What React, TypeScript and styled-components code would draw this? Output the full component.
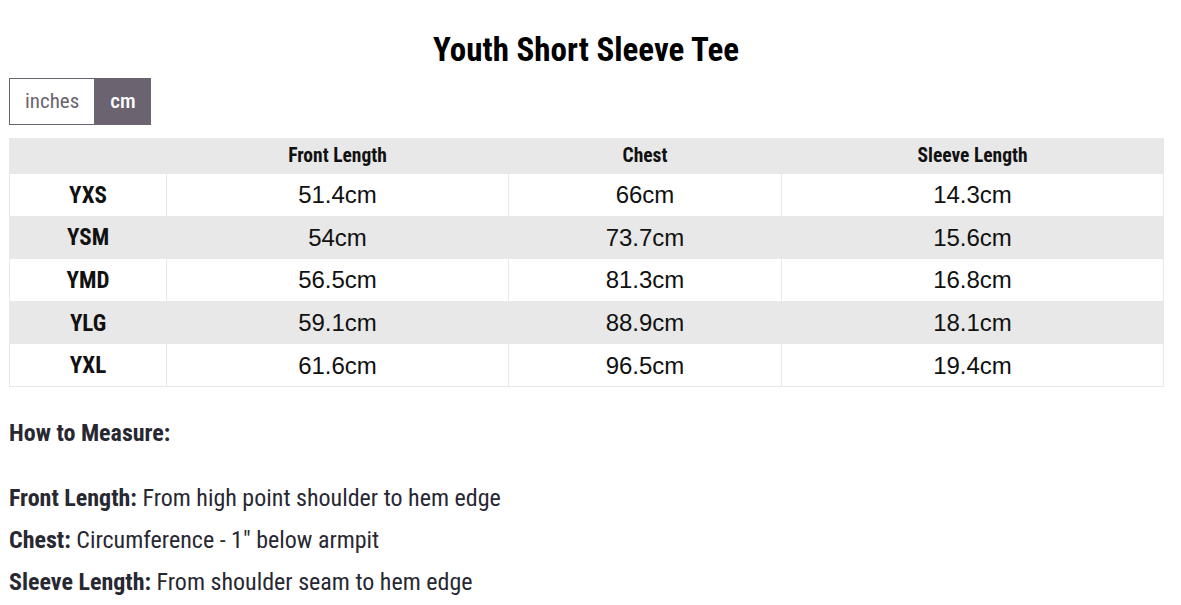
import React from "react";
import styled, { createGlobalStyle } from "styled-components";

const Global = createGlobalStyle`
  html, body { margin: 0; padding: 0; background: #fff; }
  body { font-family: "Roboto Condensed", Roboto, "Liberation Sans", sans-serif; }
`;

const Page = styled.div`
  width: 1154px;
  padding: 0 0 0 9px;
  display: flex;
  flex-direction: column;
`;

const Title = styled.h1`
  margin: 31px 0 0;
  height: 38px;
  line-height: 38px;
  text-align: center;
  font-size: 33px;
  font-weight: 700;
  color: #000;
`;

const Toggle = styled.div`
  margin-top: 9px;
  display: flex;
  align-self: flex-start;
`;

const ToggleBtn = styled.div<{ $active?: boolean }>`
  height: 47px;
  box-sizing: border-box;
  display: flex;
  align-items: center;
  justify-content: center;
  padding: 0 ${(p) => (p.$active ? "14px" : "15px")} 2px;
  font-size: 21px;
  border: 1px solid #6b6370;
  background: ${(p) => (p.$active ? "#6b6370" : "#fff")};
  color: ${(p) => (p.$active ? "#fff" : "#6b6370")};
  font-weight: ${(p) => (p.$active ? 500 : 400)};
`;

const Table = styled.table`
  margin-top: 13px;
  width: 1154px;
  border-collapse: collapse;
  table-layout: fixed;
`;

const HeadCell = styled.th`
  background: #e8e8e8;
  height: 32px;
  padding: 0 0 2px;
  font-size: 19.5px;
  font-weight: 700;
  color: #111;
  text-align: center;
  border: 1px solid #e8e8e8;
`;

const Row = styled.tr<{ $shade: boolean }>`
  background: ${(p) => (p.$shade ? "#e8e8e8" : "#fff")};
`;

const SizeCell = styled.td`
  height: 40.6px;
  padding: 1px 0 0;
  text-align: center;
  font-size: 23px;
  font-weight: 700;
  color: #111;
  border: 1px solid #e8e8e8;
`;

const ValueCell = styled.td`
  padding: 1px 0 0;
  text-align: center;
  font-family: "Liberation Sans", Arial, sans-serif;
  font-size: 24px;
  color: #111;
  border: 1px solid #e8e8e8;
`;

const Guide = styled.div`
  margin-top: 32px;
  color: #282832;
  font-size: 24px;
`;

const GuideTitle = styled.div`
  font-weight: 700;
  height: 28px;
  line-height: 28px;
  margin-bottom: 37px;
`;

const GuideLine = styled.div`
  height: 42px;
  line-height: 28px;
`;

const Strong = styled.b`
  font-weight: 700;
`;

const rows = [
  ["YXS", "51.4cm", "66cm", "14.3cm"],
  ["YSM", "54cm", "73.7cm", "15.6cm"],
  ["YMD", "56.5cm", "81.3cm", "16.8cm"],
  ["YLG", "59.1cm", "88.9cm", "18.1cm"],
  ["YXL", "61.6cm", "96.5cm", "19.4cm"],
];

export default function App() {
  return (
    <Page>
      <Global />
      <Title>Youth Short Sleeve Tee</Title>
      <Toggle>
        <ToggleBtn>inches</ToggleBtn>
        <ToggleBtn $active>cm</ToggleBtn>
      </Toggle>
      <Table>
        <colgroup>
          <col style={{ width: 157 }} />
          <col style={{ width: 342 }} />
          <col style={{ width: 273 }} />
          <col style={{ width: 382 }} />
        </colgroup>
        <thead>
          <tr>
            <HeadCell></HeadCell>
            <HeadCell>Front Length</HeadCell>
            <HeadCell>Chest</HeadCell>
            <HeadCell>Sleeve Length</HeadCell>
          </tr>
        </thead>
        <tbody>
          {rows.map((r, i) => (
            <Row key={r[0]} $shade={i % 2 === 1}>
              <SizeCell>{r[0]}</SizeCell>
              <ValueCell>{r[1]}</ValueCell>
              <ValueCell>{r[2]}</ValueCell>
              <ValueCell>{r[3]}</ValueCell>
            </Row>
          ))}
        </tbody>
      </Table>
      <Guide>
        <GuideTitle>How to Measure:</GuideTitle>
        <GuideLine>
          <Strong>Front Length:</Strong> From high point shoulder to hem edge
        </GuideLine>
        <GuideLine>
          <Strong>Chest:</Strong> Circumference - 1" below armpit
        </GuideLine>
        <GuideLine>
          <Strong>Sleeve Length:</Strong> From shoulder seam to hem edge
        </GuideLine>
      </Guide>
    </Page>
  );
}
